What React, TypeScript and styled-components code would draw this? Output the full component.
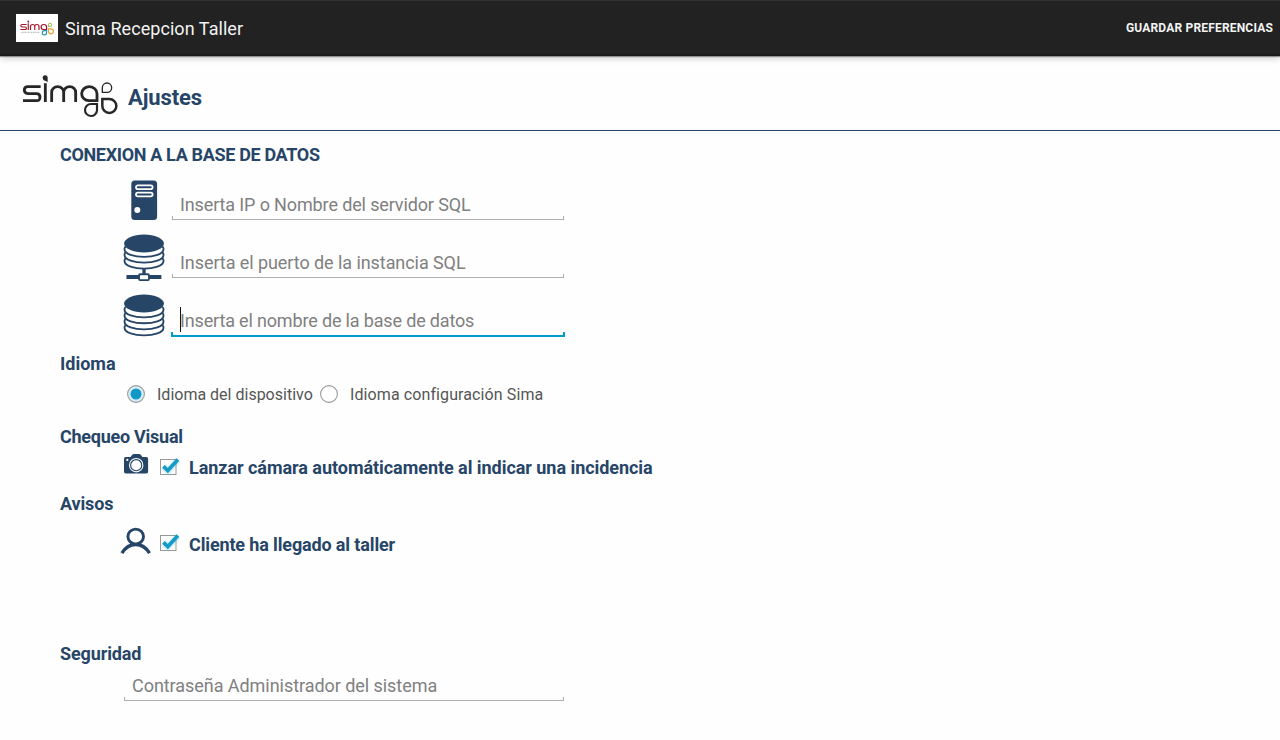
import React from "react";
import styled, { createGlobalStyle } from "styled-components";

const navy = "#264567";

const GlobalStyle = createGlobalStyle`
  * { box-sizing: border-box; }
  body { margin: 0; background: #fefefe; font-family: Roboto, "Liberation Sans", sans-serif; }
`;

const Page = styled.div`
  height: 740px;
  overflow: hidden;
  background: #fefefe;
  color: ${navy};
`;

const ActionBar = styled.header`
  position: relative;
  display: flex;
  align-items: center;
  height: 56px;
  padding: 0 7px 0 16px;
  background: #222;
  border-top: 1px solid #303030;
  border-bottom: 2px solid #1a1a1a;
  box-shadow: 0 1px 1px rgba(0, 0, 0, 0.35), 0 2px 7px rgba(0, 0, 0, 0.22);
`;

const AppIcon = styled.span`
  display: flex;
  width: 42px;
  height: 28px;
  padding: 6px 4px;
  background: #fff;
`;

const AppName = styled.h1`
  flex: 1;
  margin: 2px 0 0 7px;
  font-size: 18px;
  font-weight: 400;
  line-height: 24px;
  letter-spacing: 0.06px;
  color: #f3f3f3;
`;

const SaveButton = styled.button`
  padding: 0;
  border: 0;
  background: none;
  font: 700 12px/20px Roboto, sans-serif;
  letter-spacing: 0.18px;
  color: #f3f3f3;
`;

const Heading = styled.div`
  display: flex;
  height: 75px;
  padding: 19px 0 0 22px;
  border-bottom: 1px solid ${navy};
`;

const PageTitle = styled.h2`
  margin: 8px 0 0 10px;
  font-size: 22px;
  font-weight: 700;
  line-height: 30px;
  letter-spacing: -0.1px;
`;

const Section = styled.section<{ $height: number; $top?: number }>`
  height: ${(p) => p.$height}px;
  padding: ${(p) => p.$top ?? 0}px 0 0 60px;
`;

const SectionTitle = styled.h3<{ $tracking?: number }>`
  margin: 0;
  font-size: 18px;
  font-weight: 700;
  line-height: 24px;
  letter-spacing: ${(p) => p.$tracking ?? 0}px;
`;

const FieldRow = styled.div`
  display: flex;
  height: 58px;
  padding-left: 60px;
`;

const FieldIcon = styled.span<{ $top: number }>`
  width: 51px;
  padding: ${(p) => p.$top}px 0 0 4px;
  svg { display: block; }
`;

const PasswordRow = styled.div`
  padding-left: 63px;
`;

const Field = styled.label<{ $width: number; $top: number; $active?: boolean }>`
  position: relative;
  display: flex;
  width: ${(p) => p.$width}px;
  height: ${(p) => (p.$active ? 34 : 33)}px;
  margin-top: ${(p) => p.$top}px;
  margin-left: ${(p) => (p.$active ? 0 : 1)}px;
  padding-left: ${(p) => (p.$active ? 9 : 8)}px;
  border-bottom: ${(p) => (p.$active ? "2px solid #0099cc" : "1px solid #b0b0b0")};
  &::before, &::after {
    content: "";
    position: absolute;
    bottom: 0;
    width: ${(p) => (p.$active ? 2 : 1)}px;
    height: 3px;
    background: ${(p) => (p.$active ? "#0099cc" : "#b0b0b0")};
  }
  &::before { left: 0; }
  &::after { right: 0; }
`;

const Input = styled.input<{ $tracking: number }>`
  width: 100%;
  height: 30px;
  margin-top: 3px;
  padding: 0;
  border: 0;
  outline: 0;
  background: none;
  font: 400 18px/30px Roboto, sans-serif;
  letter-spacing: ${(p) => p.$tracking}px;
  &::placeholder { color: #808080; opacity: 1; }
`;

const Caret = styled.i`
  position: absolute;
  left: 9px;
  top: 4px;
  width: 1px;
  height: 25px;
  background: #111;
`;

const RadioGroup = styled.div`
  display: flex;
  align-items: center;
  height: 20px;
  margin-top: 9px;
  padding-left: 66px;
`;

const RadioLabel = styled.label<{ $width: number; $tracking?: number }>`
  display: flex;
  align-items: center;
  width: ${(p) => p.$width}px;
  font-size: 16px;
  line-height: 20px;
  letter-spacing: ${(p) => p.$tracking ?? 0}px;
  white-space: nowrap;
  color: #555;
  svg { margin: 0 11px 2px 0; flex: none; }
`;

const CheckRow = styled.label<{ $top: number }>`
  display: flex;
  align-items: flex-start;
  margin-top: ${(p) => p.$top}px;
  padding-left: 60px;
`;

const CheckIcon = styled.span<{ $left: number; $top: number }>`
  width: 39px;
  height: 30px;
  padding: ${(p) => p.$top}px 0 0 ${(p) => p.$left}px;
  svg { display: block; }
`;

const CheckMark = styled.svg`
  flex: none;
  margin-top: 3px;
`;

const CheckText = styled.span<{ $top: number; $tracking: number }>`
  margin: ${(p) => p.$top}px 0 0 8px;
  font-size: 18px;
  font-weight: 700;
  line-height: 24px;
  letter-spacing: ${(p) => p.$tracking}px;
`;

function SimaLogo({ width, height, color = "#272727", petals = ["#272727", "#272727", "#272727"], small = false }: {
  width: number; height: number; color?: string; petals?: string[]; small?: boolean;
}) {
  return (
    <svg width={width} height={height} viewBox="21 21 288 129" fill="none" strokeWidth={small ? 10 : 8.5}>
      <g stroke={color}>
        <path d="M77 56H39Q28 56 28 66T39 77H64Q75 77 75 88T64 98H24" />
        <path d="M91 46V102M110 102V73a18 17 0 0 1 36 0V102M146 73a18 17 0 0 1 36 0V102" />
        <path d="M246 98H222a23 21 0 1 1 24-21V102" />
      </g>
      <path d="M83 29a7.5 7.5 0 0 1 15 0v14q-4-5-8-5q-7-1-7-9z" fill={color} />
      <path d="M262 73V59a14 14 0 1 1 14 14z" stroke={petals[0]} strokeWidth={small ? 8 : 4} />
      <path d="M262 93H283a21 21 0 1 1-21 21z" stroke={petals[1]} strokeWidth={small ? 10 : 7.5} />
      <path d="M246 108V127a18 18 0 1 1-18-19z" stroke={petals[2]} strokeWidth={small ? 10 : 6.5} />
      {small && <path d="M30 122H190" stroke="#aaa" strokeWidth="8" strokeDasharray="12 5 7 4" />}
    </svg>
  );
}

function ServerIcon() {
  return (
    <svg width="42" height="40" viewBox="0 0 42 40">
      <rect x="7.3" y="0.4" width="25.8" height="39.6" rx="3.5" fill={navy} />
      <g fill="none" stroke="#fff" strokeWidth="1.8">
        <rect x="12" y="5.3" width="16.6" height="3.8" rx="1.9" />
        <rect x="12" y="12.6" width="16.6" height="3.8" rx="1.9" />
      </g>
      <circle cx="13.3" cy="30.1" r="3" fill="#fff" />
    </svg>
  );
}

function DatabaseIcon({ network = false }: { network?: boolean }) {
  const rings = network ? [14.5, 20.2, 26.2] : [15, 20.9, 27, 33];
  return (
    <svg width="41" height="48" viewBox="0.5 0 42 48" preserveAspectRatio="none" overflow="visible" fill="none" stroke={navy} strokeWidth="1.9">
      <ellipse cx="21" cy="9.5" rx="20.4" ry="9" fill={navy} stroke="none" />
      {rings.map((y) => (
        <path key={y} d={`M2.2 ${y - 2}Q1 ${y - 1} 1 ${y + 0.5}C1 ${y + 11} 41 ${y + 11} 41 ${y + 0.5}Q41 ${y - 1} 39.8 ${y - 2}`} />
      ))}
      {network && (
        <g>
          <path d="M21 34V40" strokeWidth="3.4" />
          <path d="M3 43H38.8" strokeWidth="3.8" />
          <rect x="15.9" y="40.3" width="10.2" height="5.8" rx="1" fill="#fff" />
        </g>
      )}
    </svg>
  );
}

function CameraIcon() {
  return (
    <svg width="25" height="21" viewBox="0 0 25 21" overflow="visible">
      <path d="M2 2.9H6.5L8.5 .6Q9 -.1 10 -.1H15Q16 -.1 16.5 .6L18.5 2.9H22.3Q24.1 2.9 24.1 4.7V17.7Q24.1 19.5 22.3 19.5H1.8Q0 19.5 0 17.7V4.7Q0 2.9 1.8 2.9Z" fill={navy} />
      <circle cx="12.2" cy="11.2" r="6.7" fill={navy} stroke="#fff" strokeWidth="1.1" />
      <circle cx="12.2" cy="11.2" r="5" fill="#fff" />
      <circle cx="3.3" cy="5.9" r="1.1" fill="#fff" />
    </svg>
  );
}

function PersonIcon() {
  return (
    <svg width="30" height="28" viewBox="0.3 0.7 30 28" overflow="visible" fill="none" stroke={navy} strokeWidth="2.9">
      <ellipse cx="15" cy="8.3" rx="7.8" ry="7.5" />
      <path d="M1.2 24.8C4.8 19 9.3 16.2 15 16.2S25.2 19 28.8 24.8" strokeWidth="3.4" />
    </svg>
  );
}

function CheckBox() {
  return (
    <CheckMark width="22" height="22" viewBox="0 0 22 22" fill="none">
      <rect x="1.5" y="3.5" width="15.5" height="15" fill="#fdfdfd" stroke="#999" />
      <path d="M4.5 10.5L9 15L19 4" stroke="#33b5e5" strokeOpacity=".18" strokeWidth="7" />
      <path d="M4.4 10.4L8.8 14.6L19 3.6" stroke="#179ac6" strokeWidth="3.7" />
    </CheckMark>
  );
}

function RadioMark({ selected = false }: { selected?: boolean }) {
  return (
    <svg width="20" height="20" viewBox="0 0 20 20">
      <circle cx="10" cy="10" r="8.4" fill={selected ? "#d9eff8" : "#fff"} stroke="#999" strokeWidth="1.1" />
      {selected && <circle cx="10" cy="10" r="5.5" fill="#1297c6" />}
    </svg>
  );
}

export default function App() {
  return (
    <Page>
      <GlobalStyle />
      <ActionBar>
        <AppIcon>
          <SimaLogo width={34} height={16} small color="#a3172c" petals={["#8dbb3d", "#eea02d", "#2497b5"]} />
        </AppIcon>
        <AppName>Sima Recepcion Taller</AppName>
        <SaveButton>GUARDAR PREFERENCIAS</SaveButton>
      </ActionBar>
      <Heading>
        <SimaLogo width={96} height={43} />
        <PageTitle>Ajustes</PageTitle>
      </Heading>
      <main>
        <Section $height={221} $top={12}>
          <SectionTitle $tracking={-0.34}>CONEXION A LA BASE DE DATOS</SectionTitle>
          <FieldRow>
            <FieldIcon $top={13}><ServerIcon /></FieldIcon>
            <Field $width={392} $top={20}><Input $tracking={-0.13} placeholder="Inserta IP o Nombre del servidor SQL" /></Field>
          </FieldRow>
          <FieldRow>
            <FieldIcon $top={9}><DatabaseIcon network /></FieldIcon>
            <Field $width={392} $top={20}><Input $tracking={-0.07} placeholder="Inserta el puerto de la instancia SQL" /></Field>
          </FieldRow>
          <FieldRow>
            <FieldIcon $top={11}><DatabaseIcon /></FieldIcon>
            <Field $width={394} $top={20} $active>
              <Input $tracking={-0.16} placeholder="Inserta el nombre de la base de datos" />
              <Caret />
            </Field>
          </FieldRow>
        </Section>
        <Section $height={73}>
          <SectionTitle>Idioma</SectionTitle>
          <RadioGroup>
            <RadioLabel $width={193}><RadioMark selected />Idioma del dispositivo</RadioLabel>
            <RadioLabel $width={230} $tracking={0.1}><RadioMark />Idioma configuración Sima</RadioLabel>
          </RadioGroup>
        </Section>
        <Section $height={67}>
          <SectionTitle $tracking={-0.26}>Chequeo Visual</SectionTitle>
          <CheckRow $top={4}>
            <CheckIcon $left={4} $top={1}><CameraIcon /></CheckIcon>
            <CheckBox />
            <CheckText $top={3} $tracking={-0.045}>Lanzar cámara automáticamente al indicar una incidencia</CheckText>
          </CheckRow>
        </Section>
        <Section $height={150}>
          <SectionTitle $tracking={-0.15}>Avisos</SectionTitle>
          <CheckRow $top={13}>
            <CheckIcon $left={1} $top={0}><PersonIcon /></CheckIcon>
            <CheckBox />
            <CheckText $top={4} $tracking={-0.14}>Cliente ha llegado al taller</CheckText>
          </CheckRow>
        </Section>
        <Section $height={98}>
          <SectionTitle $tracking={-0.12}>Seguridad</SectionTitle>
          <PasswordRow>
            <Field $width={440} $top={2}>
              <Input type="password" $tracking={-0.05} placeholder="Contraseña Administrador del sistema" />
            </Field>
          </PasswordRow>
        </Section>
      </main>
    </Page>
  );
}
